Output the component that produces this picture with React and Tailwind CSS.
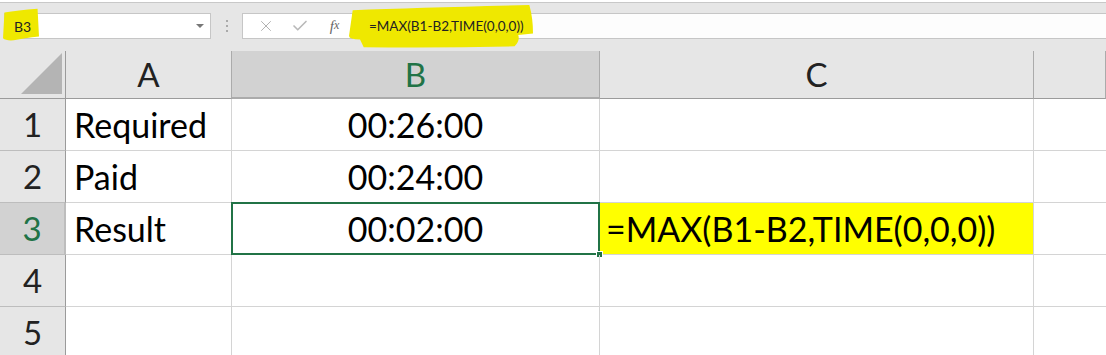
import { X, Check } from 'lucide-react'

const rows = [
  { n: 1, a: 'Required', b: '00:26:00', c: '' },
  { n: 2, a: 'Paid', b: '00:24:00', c: '' },
  { n: 3, a: 'Result', b: '00:02:00', c: '=MAX(B1-B2,TIME(0,0,0))' },
  { n: 4, a: '', b: '', c: '' },
  { n: 5, a: '', b: '', c: '' },
]

const GREEN = 'border-[#217346]'

// freehand marker stroke, sits under the text it marks
function Highlighter({ className, d }) {
  return (
    <svg className={`pointer-events-none absolute ${className}`} viewBox="0 0 100 100" preserveAspectRatio="none">
      <path d={d} fill="#efe800" />
    </svg>
  )
}

function FormulaBar() {
  return (
    <div className="h-[49px] border-t border-[#c8c8c8] mt-[2px] bg-[#e6e6e6] flex items-start pt-[10px] font-[Lato,sans-serif]">
      {/* name box */}
      <div className="relative ml-[4px] w-[207px] h-[26px] bg-white border border-[#c6c6c6] flex items-center pl-[9px] pr-[6px] text-[14px] text-[#222]">
        <Highlighter className="-left-[2px] -top-[6px] w-[36px] h-[33px]" d="M4 14 Q40 6 96 2 L100 86 Q60 90 30 98 Q8 100 0 92 Z" />
        <span className="relative flex-1">B3</span>
        <span className="w-0 h-0 border-l-[4px] border-r-[4px] border-t-[4px] border-l-transparent border-r-transparent border-t-[#777]" />
      </div>
      {/* grip dots */}
      <div className="w-[31px] h-[26px] flex flex-col items-center justify-center gap-[3px]">
        <span className="w-[2px] h-[2px] bg-[#aaa]" />
        <span className="w-[2px] h-[2px] bg-[#aaa]" />
        <span className="w-[2px] h-[2px] bg-[#aaa]" />
      </div>
      {/* cancel / enter / fx */}
      <div className="w-[111px] h-[26px] bg-white border border-[#c6c6c6] flex items-center">
        <div className="w-[40px] flex justify-center pl-[6px]">
          <X size={18} strokeWidth={1.2} color="#a9a9a9" />
        </div>
        <div className="w-[34px] flex justify-center">
          <Check size={18} strokeWidth={2.2} color="#b9b9b9" />
        </div>
        <div className="flex-1 flex justify-center font-['Liberation_Serif',serif] italic text-[#666] text-[15px] leading-none">
          f<span className="text-[12px]">x</span>
        </div>
      </div>
      {/* formula input */}
      <div className="relative ml-[3px] flex-1 h-[26px] bg-[#fdfdfd] border-y border-l border-[#c6c6c6] flex items-center pl-[12px] text-[13.5px] text-[#222]">
        <Highlighter className="-left-[8px] -top-[9px] w-[184px] h-[43px]" d="M2 12 Q40 6 98 0 Q100 30 100 66 L92 70 Q93 84 90 96 Q50 100 8 98 L6 80 Q0 80 0 72 Z" />
        <span className="relative">=MAX(B1-B2,TIME(0,0,0))</span>
      </div>
    </div>
  )
}

function HeaderCell({ label, selected }) {
  return (
    <div
      className={`flex items-center justify-center border-r border-[#ababab] text-[33px] leading-none ${
        selected
          ? `bg-[#d2d2d2] text-[#217346] border-b-2 ${GREEN}`
          : 'bg-[#e6e6e6] text-[#222] border-b border-b-[#9b9b9b]'
      }`}
    >
      {label}
    </div>
  )
}

function RowHeader({ n, selected }) {
  return (
    <div
      className={`flex items-center justify-center border-b border-[#bdbdbd] text-[33px] leading-none ${
        selected
          ? `bg-[#d2d2d2] text-[#217346] border-r-2 ${GREEN}`
          : 'bg-[#e6e6e6] text-[#222] border-r border-r-[#9b9b9b]'
      }`}
    >
      {n}
    </div>
  )
}

export default function App() {
  return (
    <div className="w-[1106px] h-[355px] overflow-hidden bg-white">
      <FormulaBar />

      <div className="grid grid-cols-[66px_166px_368px_434px_1fr] grid-rows-[48px_52px_52px_52px_52px_52px] font-[Lato,sans-serif]">
        {/* select-all corner */}
        <div className="relative bg-[#e6e6e6] border-r border-b border-[#9b9b9b]">
          <svg className="absolute right-[3px] bottom-[4px]" width="41" height="41" viewBox="0 0 41 41">
            <polygon points="41,0 41,41 0,41" fill="#b4b4b4" />
          </svg>
        </div>
        <HeaderCell label="A" />
        <HeaderCell label="B" selected />
        <HeaderCell label="C" />
        <HeaderCell label="" />

        {rows.map((r) => (
          <div key={r.n} className="contents">
            <RowHeader n={r.n} selected={r.n === 3} />
            <div className="flex items-center pl-[8px] border-r border-b border-[#d4d4d4] text-[34px] text-black">
              {r.a}
            </div>
            <div className="relative flex items-center justify-center border-r border-b border-[#d4d4d4] text-[34px] text-black">
              {r.b}
              {r.n === 3 && (
                <>
                  <div className={`absolute -left-px -top-px -right-px -bottom-px border-2 ${GREEN}`} />
                  <div className="absolute -right-[4px] -bottom-[4px] w-[7px] h-[7px] bg-[#217346] border border-white" />
                </>
              )}
            </div>
            <div
              className={`flex items-center pl-[6px] border-r border-b border-[#d4d4d4] text-[34px] text-black whitespace-nowrap ${
                r.c ? 'bg-[#ffff00]' : ''
              }`}
            >
              {r.c}
            </div>
            <div className="border-b border-[#d4d4d4]" />
          </div>
        ))}
      </div>
    </div>
  )
}
